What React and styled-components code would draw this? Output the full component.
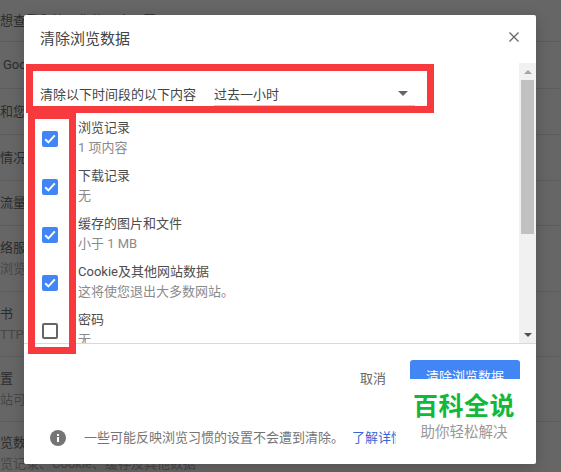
import styled, { createGlobalStyle } from "styled-components";

const GlobalStyle = createGlobalStyle`
  html, body {
    margin: 0;
    padding: 0;
    background: #666;
  }
  * {
    box-sizing: border-box;
  }
`;

const Page = styled.div`
  position: relative;
  width: 561px;
  height: 472px;
  overflow: hidden;
  background: #666;
  font-family: Roboto, "Noto Sans CJK SC", sans-serif;
  font-size: 13px;
`;

const SettingsRow = styled.div`
  display: flex;
  flex-direction: column;
  justify-content: center;
  height: ${(p) => p.$height}px;
  border-bottom: 1px solid #5c5c5c;
  padding-left: ${(p) => p.$shift || 0}px;
  white-space: nowrap;
`;

const SettingsTitle = styled.div`
  line-height: 20px;
  color: #2c2c2c;
`;

const SettingsSub = styled.div`
  line-height: 20px;
  margin-top: 1px;
  color: #474747;
`;

const Dialog = styled.div`
  position: absolute;
  left: 24px;
  top: 15px;
  width: 512px;
  height: 449px;
  display: flex;
  flex-direction: column;
  background: #fff;
  border-radius: 2px;
  box-shadow: 0 4px 16px rgba(0, 0, 0, 0.2);
  color: #444;
`;

const Header = styled.div`
  flex: none;
  height: 48px;
  display: flex;
  align-items: center;
  justify-content: space-between;
  padding: 0 17px 4px 16px;
  font-size: 15px;
`;

const Main = styled.div`
  flex: none;
  height: 281px;
  display: flex;
  border-bottom: 1px solid #dadada;
`;

const Pane = styled.div`
  flex: 1;
  overflow: hidden;
  padding: 0 0 0 16px;
`;

const SelectRow = styled.div`
  display: flex;
  align-items: flex-end;
  height: 43px;
  margin-bottom: 9px;
`;

const SelectLabel = styled.span`
  line-height: 20px;
  margin-bottom: 1px;
  width: 174px;
  flex: none;
`;

const SelectBox = styled.div`
  display: flex;
  align-items: center;
  justify-content: space-between;
  width: 201px;
  height: 24px;
  padding-right: 7px;
  border-bottom: 1px solid #ccc;
`;

const Caret = styled.span`
  width: 0;
  height: 0;
  border-left: 5px solid transparent;
  border-right: 5px solid transparent;
  border-top: 5px solid #666;
`;

const Item = styled.div`
  display: flex;
  align-items: center;
  height: 48px;
  gap: 20px;
  padding-left: 2px;
`;

const ItemText = styled.div`
  display: flex;
  flex-direction: column;
  margin-bottom: 2px;
`;

const ItemTitle = styled.div`
  line-height: 20px;
  color: #4d4d4d;
`;

const ItemSub = styled.div`
  line-height: 20px;
  color: #8a8a8a;
`;

const Box = styled.span`
  flex: none;
  display: flex;
  align-items: center;
  justify-content: center;
  width: 16px;
  height: 16px;
  border-radius: 2px;
  background: ${(p) => (p.$checked ? "#4285f4" : "#fff")};
  border: ${(p) => (p.$checked ? "none" : "2px solid #666")};
`;

const Scrollbar = styled.div`
  flex: none;
  width: 17px;
  display: flex;
  flex-direction: column;
  background: #f1f1f1;
  padding: 0 2px;
`;

const ArrowCell = styled.div`
  flex: none;
  height: 17px;
  display: flex;
  align-items: center;
  justify-content: center;
`;

const ScrollArrow = styled.span`
  width: 0;
  height: 0;
  border-left: 4px solid transparent;
  border-right: 4px solid transparent;
  border-${(p) => (p.$up ? "bottom" : "top")}: 4px solid ${(p) => (p.$up ? "#a3a3a3" : "#505050")};
`;

const Thumb = styled.div`
  flex: none;
  height: 154px;
  background: #c1c1c1;
`;

const Spacer = styled.div`
  flex: 1;
`;

const Footer = styled.div`
  flex: 1;
  display: flex;
  flex-direction: column;
  padding: 16px 16px 0;
`;

const Actions = styled.div`
  display: flex;
  justify-content: flex-end;
  align-items: center;
  gap: 24px;
`;

const CancelButton = styled.span`
  color: #666;
`;

const ClearButton = styled.span`
  width: 110px;
  height: 34px;
  line-height: 34px;
  text-align: center;
  color: #fff;
  background: #4285f4;
  border-radius: 3px;
`;

const Note = styled.div`
  display: flex;
  align-items: center;
  margin-top: 34px;
  padding-left: 10px;
  line-height: 20px;
  white-space: nowrap;
  color: #757575;
`;

const NoteText = styled.span`
  margin-left: 18px;
  margin-right: 8px;
`;

const NoteLink = styled.span`
  color: #3367d6;
`;

const RedFrame = styled.div`
  position: absolute;
  left: ${(p) => p.$left}px;
  top: ${(p) => p.$top}px;
  width: ${(p) => p.$width}px;
  height: ${(p) => p.$height}px;
  border: 7px solid #f63a3d;
`;

const Watermark = styled.div`
  position: absolute;
  left: 396px;
  top: 379px;
  width: 136px;
  height: 72px;
  padding-top: 13px;
  display: flex;
  flex-direction: column;
  align-items: center;
  background: #fff;
`;

const BrandName = styled.div`
  font-size: 25px;
  line-height: 30px;
  font-weight: 700;
  letter-spacing: 0.5px;
  color: #12b83a;
`;

const BrandTag = styled.div`
  margin-top: 1px;
  font-size: 14.5px;
  line-height: 20px;
  color: #999;
`;

const backgroundRows = [
  { height: 42, title: "想查看和管理您的同步设置" },
  { height: 47, title: "Google", shift: 3 },
  { height: 46, title: "和您" },
  { height: 46, title: "情况" },
  { height: 45, title: "流量" },
  { height: 66, title: "络服", sub: "浏览" },
  { height: 65, title: "书", sub: "TTPS" },
  { height: 65, title: "置", sub: "站可" },
  { height: 63, title: "览数", sub: "览记录、Cookie、缓存及其他数据" },
];

const items = [
  { title: "浏览记录", sub: "1 项内容", checked: true },
  { title: "下载记录", sub: "无", checked: true },
  { title: "缓存的图片和文件", sub: "小于 1 MB", checked: true },
  { title: "Cookie及其他网站数据", sub: "这将使您退出大多数网站。", checked: true },
  { title: "密码", sub: "无", checked: false },
];

function CheckIcon() {
  return (
    <svg width="12" height="10" viewBox="0 0 12 10" fill="none">
      <path d="M1.2 5.2l3.2 3.2 6.4-7" stroke="#fff" strokeWidth="2" />
    </svg>
  );
}

function CloseIcon() {
  return (
    <svg width="10" height="10" viewBox="0 0 10 10" fill="none">
      <path d="M0.5 0.5l9 9M9.5 0.5l-9 9" stroke="#666" strokeWidth="1.3" />
    </svg>
  );
}

function InfoIcon() {
  return (
    <svg width="16" height="16" viewBox="0 0 16 16">
      <circle cx="8" cy="8" r="8" fill="#757575" />
      <rect x="7" y="7" width="2" height="5" fill="#fff" />
      <rect x="7" y="4" width="2" height="2" fill="#fff" />
    </svg>
  );
}

export default function App() {
  return (
    <Page>
      <GlobalStyle />
      {backgroundRows.map((row) => (
        <SettingsRow key={row.title} $height={row.height} $shift={row.shift}>
          <SettingsTitle>{row.title}</SettingsTitle>
          {row.sub && <SettingsSub>{row.sub}</SettingsSub>}
        </SettingsRow>
      ))}
      <Dialog>
        <Header>
          清除浏览数据
          <CloseIcon />
        </Header>
        <Main>
          <Pane>
            <SelectRow>
              <SelectLabel>清除以下时间段的以下内容</SelectLabel>
              <SelectBox>
                过去一小时
                <Caret />
              </SelectBox>
            </SelectRow>
            {items.map((item) => (
              <Item key={item.title}>
                <Box $checked={item.checked}>{item.checked && <CheckIcon />}</Box>
                <ItemText>
                  <ItemTitle>{item.title}</ItemTitle>
                  <ItemSub>{item.sub}</ItemSub>
                </ItemText>
              </Item>
            ))}
          </Pane>
          <Scrollbar>
            <ArrowCell>
              <ScrollArrow $up />
            </ArrowCell>
            <Thumb />
            <Spacer />
            <ArrowCell>
              <ScrollArrow />
            </ArrowCell>
          </Scrollbar>
        </Main>
        <Footer>
          <Actions>
            <CancelButton>取消</CancelButton>
            <ClearButton>清除浏览数据</ClearButton>
          </Actions>
          <Note>
            <InfoIcon />
            <NoteText>一些可能反映浏览习惯的设置不会遭到清除。</NoteText>
            <NoteLink>了解详情</NoteLink>
          </Note>
        </Footer>
      </Dialog>
      <RedFrame $left={26} $top={64} $width={408} $height={49} />
      <RedFrame $left={28} $top={112} $width={48} $height={242} />
      <Watermark>
        <BrandName>百科全说</BrandName>
        <BrandTag>助你轻松解决</BrandTag>
      </Watermark>
    </Page>
  );
}
